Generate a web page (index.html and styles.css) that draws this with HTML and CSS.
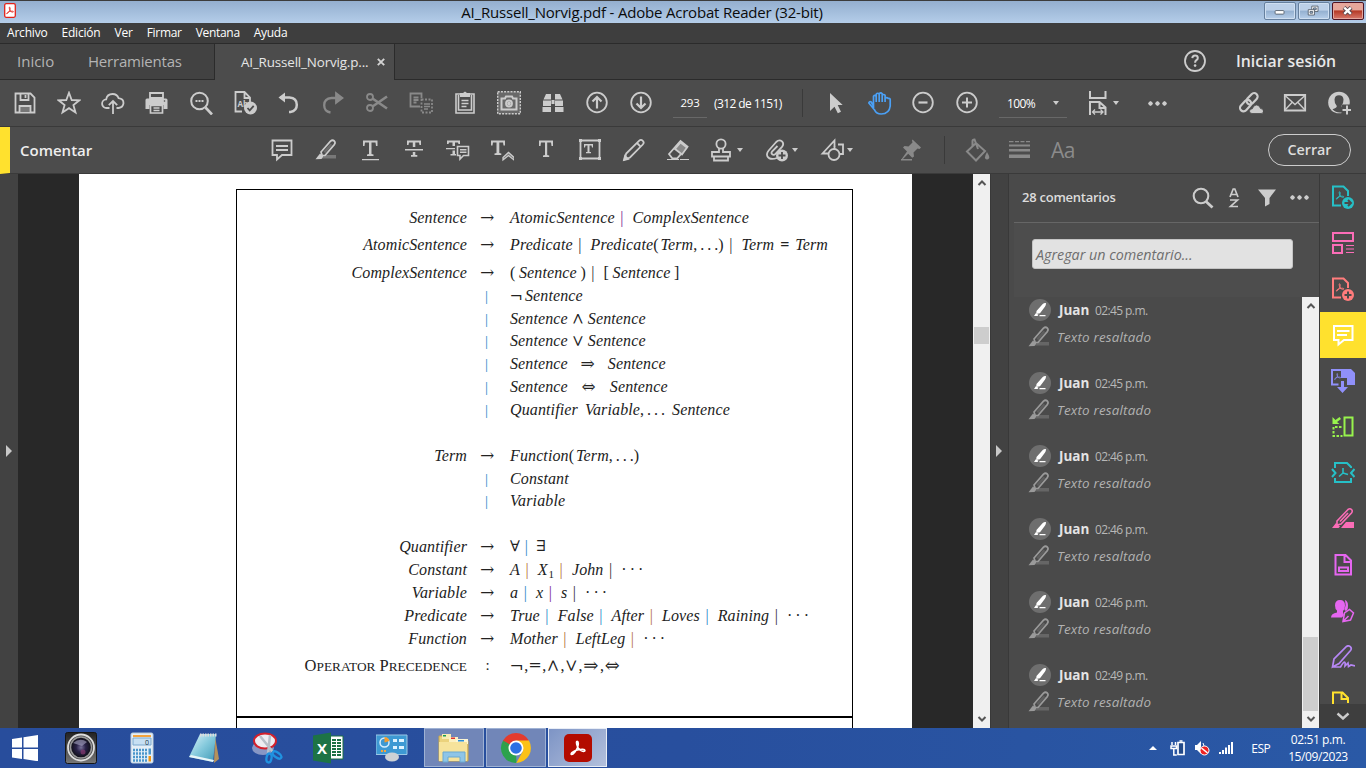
FILE: index.html
```html
<!DOCTYPE html>
<html lang="es">
<head>
<meta charset="utf-8">
<title>AI_Russell_Norvig.pdf - Adobe Acrobat Reader (32-bit)</title>
<link rel="stylesheet" href="styles.css">
</head>
<body>
<svg class="defs" width="0" height="0">
  <symbol id="marker" viewBox="0 0 24 24">
    <path d="M8 20.500h14v-3.500h-11z" fill="currentColor" opacity=".35"/>
    <path d="M7 14 16.500 3.200q2-1.800 3.800-.2 1.500 1.600 0 3.600L11 17.500H8.200z" fill="none" stroke="currentColor" stroke-width="1.700"/>
    <path d="M9.500 13.500 16.500 5.500l1.800 1.500-7 8.200z" fill="currentColor" opacity=".25"/>
    <path d="M6 15.500 9.500 18.500 7.500 21 1.500 21.200z" fill="currentColor"/>
  </symbol>
  <symbol id="avatar" viewBox="0 0 24 24">
    <circle cx="12" cy="12" r="11" fill="#6e6e6e"/>
    <path d="M8.500 13 14.500 6.200q2-1.600 3.600-1-.2 2.200-1.200 3.600L12 15.300l-3.800.7zM6 18l1.800-2.800 2.700 1.600-1 1.200zM11.500 17h6v1.200h-6z" fill="#fff"/>
  </symbol>
  <symbol id="acro" viewBox="0 0 12 12">
    <path d="M5.400 1.500c1 0 1 2.200.3 4.200S2.700 10.500 1.700 10.300 2.700 8 5.600 7.300s5-.6 5 .4-2.700.6-4-1S4.500 1.500 5.400 1.500z" fill="none" stroke="currentColor" stroke-width="1.100"/>
  </symbol>
  <symbol id="up" viewBox="0 0 10 8"><path d="M1.500 6 5 2.500 8.500 6" fill="none" stroke="#555" stroke-width="2"/></symbol>
  <symbol id="down" viewBox="0 0 10 8"><path d="M1.500 2 5 5.500 8.500 2" fill="none" stroke="#555" stroke-width="2"/></symbol>
</svg>

<header class="titlebar">
  <svg class="app-icon" viewBox="0 0 12 15"><rect x=".7" y=".7" width="10.600" height="13.600" rx="1.500" fill="#fff" stroke="#e2231a" stroke-width="1.300"/><use href="#acro" x="1.500" y="3" width="9" height="9" color="#e2231a"/></svg>
  <h1 class="window-title">AI_Russell_Norvig.pdf - Adobe Acrobat Reader (32-bit)</h1>
  <div class="window-buttons">
    <span class="wbtn"><svg viewBox="0 0 32 18"><rect x="10.500" y="8.500" width="10" height="4" rx="1" fill="#fff" stroke="#56606c"/></svg></span>
    <span class="wbtn"><svg viewBox="0 0 32 18"><path d="M13.500 3.500h7v6h-7z" fill="#fff" stroke="#56606c"/><path d="M15.500 5.500h3v2h-3z" fill="#9db9d8" stroke="#56606c"/><path d="M9.500 7.500h7v6h-7z" fill="#fff" stroke="#56606c"/><path d="M11.500 9.500h3v2h-3z" fill="#9db9d8" stroke="#56606c"/></svg></span>
    <span class="wbtn close"><svg viewBox="0 0 32 18"><path d="M11.500 5 19.500 12.500M19.500 5 11.500 12.500" stroke="#51424a" stroke-width="4.600"/><path d="M11.800 5.300 19.200 12.200M19.200 5.300 11.800 12.200" stroke="#fff" stroke-width="2.600"/></svg></span>
  </div>
</header>

<nav class="menubar"><span>Archivo</span><span>Edición</span><span>Ver</span><span>Firmar</span><span>Ventana</span><span>Ayuda</span></nav>

<div class="tabs">
  <span class="tab home">Inicio</span><span class="tab tools">Herramientas</span>
  <span class="tab active"><span class="doc-name">AI_Russell_Norvig.p...</span><svg viewBox="0 0 10 10"><path d="M1.800 1.800 8.200 8.200M8.200 1.800 1.800 8.200" stroke="#d2d2d2" stroke-width="1.900"/></svg></span>
  <svg class="help" viewBox="0 0 24 24"><circle cx="12" cy="12" r="10" fill="none" stroke="#ccc" stroke-width="1.800"/><path d="M9.300 9.200q.2-2.600 2.800-2.600t2.700 2.300q0 1.300-1.400 2.200T12.100 13.800" fill="none" stroke="#ccc" stroke-width="2"/><circle cx="12.100" cy="16.600" r="1.300" fill="#ccc"/></svg>
  <span class="signin">Iniciar sesión</span>
</div>

<div class="toolbar">
  <div class="icons">
    <svg viewBox="0 0 24 24" class="line"><path d="M2.500 2.500h15l4 4v15h-19z"/><path d="M7.500 3v6h8V3"/><path d="M6.500 21v-6h11v6" fill="#777"/><path d="M12.500 4v3"/></svg>
    <svg viewBox="0 0 24 24" class="line"><path d="m12 1.800 2.700 7.200 7.700.3-6 4.800 2.100 7.400L12 17.200l-6.500 4.300 2.100-7.400-6-4.800 7.700-.3z"/></svg>
    <svg viewBox="0 0 24 24" class="line"><path d="M8.500 17H5.600a4.300 4.300 0 0 1-.4-8.600Q6 3 11.600 3q4.600 0 6 4.200 5 .6 4.900 5-.4 4.300-4.800 4.800h-2.200M12 23V10.500M7.800 14.200 12 10l4.200 4.200"/></svg>
    <svg viewBox="0 0 24 24"><path d="M5 2h13v5H5z" fill="none" stroke="#ccc" stroke-width="1.800"/><path d="M.5 9q0-1.500 1.500-1.500h19q1.500 0 1.500 1.500v9h-4v-4h-14v4h-4z"/><path d="M5.500 14.500h12v7.500h-12zM8.500 17h6M8.500 19.500h6" fill="none" stroke="#ccc" stroke-width="1.700"/><circle cx="19.500" cy="10" r=".8" fill="#4c4c4c"/></svg>
    <svg viewBox="0 0 24 24" class="line"><circle cx="10.500" cy="10" r="8.300" stroke-width="2"/><path d="m16.500 16.500 6.500 7" stroke-width="2.600"/><path d="M6.500 10h8" stroke-width="2" stroke-dasharray="2 1"/></svg>
    <svg viewBox="0 0 24 24" class="line"><path d="M9 20.500H2.500V1h9L17 6.500V11M11.500 1v6H17"/><text x="4.500" y="16" class="ab">Ab</text><circle cx="17.500" cy="17" r="6.500" fill="#ccc" stroke="none"/><path d="m14.500 17 2.200 2.400 4-4.500" stroke="#4c4c4c"/></svg>
    <svg viewBox="0 0 24 24" class="line"><path d="M3 6.500h9.500q7.300.5 7.300 7.300 0 6.200-6.300 7.200H12" stroke-width="2.500"/><path d="M8 1.500v10L1.500 6.500z" fill="#ccc" stroke="none"/></svg>
    <svg viewBox="0 0 24 24" class="line dim"><path d="M20 7h-9.500q-7.300.5-7.300 7.300 0 6.200 6.300 7.200" stroke-width="2.300"/><path d="M15 2v10l6.500-5z" fill="#ccc"/></svg>
    <svg viewBox="0 0 24 24" class="line dim"><circle cx="5" cy="6" r="3"/><circle cx="5" cy="17" r="3"/><path d="M7.500 7.500 22 17.500M7.500 15.500 22 5.500" stroke-width="2.600"/></svg>
    <svg viewBox="0 0 24 24" class="line dim"><path d="M11 15.500H1.500v-13h11V7M4.500 6.500h5M4.500 9h5M4.500 11.500h3"/><path d="M12.500 8.500h10.500v13H12.500z" stroke-dasharray="2 1.500"/><path d="M15 13h6M15 15.500h6M15 18h4" stroke-width="1.300"/></svg>
    <svg viewBox="0 0 24 24" class="line"><path d="M3 3h18v19H3zM5.500 4v15h13V4" stroke-width="1.600"/><path d="M8.500 9.500h7M8.500 12.500h7M8.500 15.500h5" stroke-width="1.400"/><path d="M7 2h3l2-1.500L14 2h3v4H7z" fill="#ccc" stroke="none"/></svg>
    <svg viewBox="0 0 24 24" class="line"><path d="M.7.700h22.600v22H.7z" fill="#696969" stroke-width="1.400" stroke-dasharray="2 1.200"/><path d="M4.500 7.500H8l1-2h6l1 2h3.500v11h-15z" stroke-width="2"/><circle cx="12" cy="12.500" r="3"/><circle cx="12" cy="12.500" r="1" fill="#ccc"/></svg>
    <svg viewBox="0 0 24 24"><path d="M5 3h5v5.500H2.500zM14 3h5l2.500 5.500H14zM2 9.500h8V15H2zM14 9.500h8V15h-8zM1.500 16H10v5H1.500zM14 16h8.500v5H14zM10.500 9h3v4h-3z"/></svg>
    <svg viewBox="0 0 24 24" class="line"><circle cx="12" cy="11.500" r="9.800"/><path d="M12 17.500V7M7.500 10.500 12 6l4.500 4.500" stroke-width="2.200"/></svg>
    <svg viewBox="0 0 24 24" class="line"><circle cx="12" cy="11.500" r="9.800"/><path d="M12 5.500v11M7.500 12.500l4.500 4.500 4.500-4.500" stroke-width="2.200"/></svg>
  </div>
  <span class="page-field">293</span><span class="page-count">(312 de 1151)</span>
  <span class="divider d1"></span>
  <div class="icons nav">
    <svg viewBox="0 0 24 24"><path d="M6 2v18l4.500-4.200 3.300 6.500 3.200-1.500L13.700 14h5z"/></svg>
    <svg viewBox="0 0 24 24" class="hand"><path d="M5.500 15V5.300q1.300-1.800 2.700 0V11 3.200q1.500-1.900 3 0V11 2.800q1.500-1.800 3 0V11 4.300q1.500-1.600 2.900 0V11 7.500q1.600-1.600 3.100 0 1.700-.5 2 1V15q-.8 7.800-9 8-5 0-6.600-4L.8 12q.5-2 2.400-1z"/></svg>
    <svg viewBox="0 0 24 24" class="line"><circle cx="11" cy="11.500" r="9.800"/><path d="M6.500 11.500h9" stroke-width="2.200"/></svg>
    <svg viewBox="0 0 24 24" class="line"><circle cx="11" cy="11.500" r="9.800"/><path d="M6 11.500h10M11 6.500v10" stroke-width="2"/></svg>
  </div>
  <span class="zoom-field">100%<i class="caret"></i></span>
  <svg class="fit" viewBox="0 0 24 26"><g fill="none" stroke="#ccc" stroke-width="2"><path d="M4 1v7h15.500V1M4 25V12h9.500l6 5.500V25M13.500 12v6h6"/><path d="M6.500 22h10M9 19.500 6.500 22 9 24.500M14.500 19.500 17 22l-2.500 2.500" stroke-width="1.300"/></g></svg><i class="caret fit-caret"></i>
  <span class="dots more"></span>
  <div class="icons share">
    <svg viewBox="0 0 24 24" class="line"><g transform="rotate(-47 10 11)"><rect x="-1.500" y="7.500" width="13" height="7" rx="3.500" stroke-width="2.200"/><rect x="8" y="7.500" width="13" height="7" rx="3.500" stroke-width="2.200"/></g><path d="M13 22.500q-2.500 0-2.500-2.300t2.800-2.400Q14.500 14 17.500 14t4 3.500q3 .2 3 2.700t-2.500 2.300z" fill="#ccc" stroke="#4c4c4c" stroke-width=".8"/></svg>
    <svg viewBox="0 0 24 24" class="line"><path d="M1.800 4h20.400v15.500H1.800z"/><path d="m2 4.500 10 9 10-9M2 19l7-7.500M22 19l-7-7.500" stroke-width="1.400"/></svg>
    <svg viewBox="0 0 24 24"><circle cx="12" cy="11.500" r="10.800"/><path d="M5.500 18.300q4.500-1.300 4.300-3.300Q7.300 12.500 7.500 8.500q.3-4.300 4.500-4.300t4.500 4.300q.2 4-2.300 6.500.2 1.500 2.300 2.200V21q-6.500 2-11-2.700z" fill="#4c4c4c"/><path d="M14.500 13.500h10v10h-10z" fill="#4c4c4c"/><path d="M20 14.500v9M15.500 19h8.500" stroke="#ccc" stroke-width="2"/></svg>
  </div>
</div>

<div class="commentbar">
  <h2>Comentar</h2>
  <div class="icons">
    <svg viewBox="0 0 24 24" class="line"><path d="M2.500 2.500h19V17H12l-5 4.500V17H2.500zM6 8h12M6 12h12"/></svg>
    <svg viewBox="0 0 24 24"><use href="#marker"/></svg>
    <svg viewBox="0 0 24 24"><path d="M5 2.500h14.500V8H18l-.5-3.500H13.500V16l2 .5V18H9v-1.500l2-.5V4.500H7L6.500 8H5zM4 21h17v1.300H4z"/></svg>
    <svg viewBox="0 0 24 24"><path d="M5 2.500h14V7h-1.500L17 4.500h-3.700V9h-2.500V4.500H7L6.500 7H5zM3 11h18v1.400H3zM10.800 14h2.500v3h2v1.800H9V17h1.800z"/></svg>
    <svg viewBox="0 0 24 24"><path d="M1 2.500h13V6h-1.500L12 4.500H9V8H6.500V4.500H3L2.500 6H1zM0 10h9v1.300H0zM6.500 12.500H9V16h1v1.500H4.500V16h2z"/><path d="M11.500 8.500h11v9h-5l-3.500 3.500v-3.500h-2.500zM14 11.700h6.500M14 14.300h6.500" fill="none" stroke="#ccc" stroke-width="1.600"/></svg>
    <svg viewBox="0 0 24 24"><path d="M1 2.500h14V7.500h-1.500L13 4.500H9.300V15l2 .5V17H4.500v-1.500l2-.5V4.500H3l-.5 3H1z"/><path d="m13 19.500 5.500-5 5.500 5V22l-5.500-4.500L13 22z" fill="#777" stroke="#ccc" stroke-width="1.300"/></svg>
    <svg viewBox="0 0 24 24"><path d="M5 2.500h14V8h-1.500L17 4.500h-3.800V17l2 .5V19H9v-1.500l2-.5V4.500H7L6.500 8H5z"/></svg>
    <svg viewBox="0 0 24 24" class="line"><path d="M2.500 2.500h19v18h-19z"/><path d="M1 1h3v3H1zM20 1h3v3h-3zM1 19h3v3H1zM20 19h3v3h-3z" fill="#ccc" stroke="none"/><path d="M6 6h9v3.500h-1l-.5-2h-2V14H13v1.300H8V14h1.500V7.500h-2l-.5 2H6z" fill="#ccc" stroke="none"/></svg>
    <svg viewBox="0 0 24 24" class="line"><path d="m2.500 21.500 1.700-6L17 2.800q2-1.800 3.800 0t0 3.700L8 19.500zM15 5l3.800 3.800"/><path d="m2 22 1-4 3 3z" fill="#ccc"/></svg>
    <svg viewBox="0 0 24 24" class="line"><path d="m3 16 11.500-13 7 5.500L11 20.500H6.500z"/><path d="m9 11 7 5.500 5-7-6.500-5z" fill="#888"/><path d="M1 21.500h12M14 21.500h9" stroke-width="1.200"/></svg>
  </div>
  <div class="icons wide">
    <span><svg viewBox="0 0 24 24" class="line"><circle cx="11" cy="6" r="4.600"/><path d="M9 10v4H2v4.500h18V14h-7v-4M4 18.500v4h14v-4"/></svg><i class="caret"></i></span>
    <span><svg viewBox="0 0 24 24" class="line"><path d="M12 20q-7 2.500-9.500-1.500-1.500-3 1.200-6l7.500-8.500q3-3 5.800-.6 2.400 2.600 0 5.500l-6.500 7q-1.800 1.600-3.300.4t0-3L12.500 8"/><circle cx="17" cy="17.500" r="6" fill="#ccc" stroke="none"/><path d="M17 14v7M13.500 17.500h7" stroke="#4c4c4c"/></svg><i class="caret"></i></span>
    <span><svg viewBox="0 0 24 24" class="line"><path d="M9 15.500H2.500L14.500 2.500v6M18 6.500h5V16h-3"/><path d="M14.500 8v3"/><circle cx="14" cy="16.500" r="5.500"/></svg><i class="caret"></i></span>
  </div>
  <svg class="ic pin dim" viewBox="0 0 24 24"><path d="m13.500 1.500 8.500 8-1.500 1.500-2-.5-4 4 .5 4-1.800 1.200-4-4L3 22H2l6-8.500-4-4L5.500 8l4 .5 4-4-.5-2zM2 21h11v1.500H2z"/></svg>
  <span class="divider d3"></span>
  <svg class="ic bucket dim line" viewBox="0 0 24 24"><path d="m2 13.500 9-8.500 9 8-9 9.500zM7.500 9V3q0-1.500 2-1.500L13 11" stroke-width="2"/><path d="M22 14q2.500 4 2.300 6-2.300 3-4.500 0 .2-2.500 2.200-6z" fill="#ccc" stroke="none"/></svg>
  <svg class="ic lines dim" viewBox="0 0 24 24"><path d="M2 3h4.500v1.200H2zM8 3h4v1.200H8zM13.500 3h4v1.200h-4zM19 3h4v1.200h-4zM2 6.500h21v2H2zM2 11h21v2.500H2zM2 16.500h21V20H2z"/></svg>
  <span class="aa">Aa</span>
  <span class="close-btn">Cerrar</span>
</div>

<main class="workspace">
  <div class="strip left"><i class="tri"></i></div>
  <section class="canvas">
    <div class="page">
      <div class="figure">
        <div class="grammar">
          <div class="rule r1"><em>Sentence</em><u>→</u><p><em>AtomicSentence</em><b class="pu">|</b><em>ComplexSentence</em></p></div>
          <div class="rule r2"><em>AtomicSentence</em><u>→</u><p><em>Predicate</em><b>|</b><em>Predicate</em><s>(</s><em class="tl">Term</em><s>, . . .)</s><b>|</b><em>Term</em><span class="eq">=</span><em>Term</em></p></div>
          <div class="rule r3"><em>ComplexSentence</em><u>→</u><p><span class="br">(</span><em>Sentence</em><span class="br cl">)</span><b>|</b><span class="br">[</span><em>Sentence</em><span class="br cl">]</span></p></div>
          <div class="rule"><em></em><u class="alt">|</u><p><span class="m neg">¬</span><em>Sentence</em></p></div>
          <div class="rule"><em></em><u class="alt">|</u><p><em>Sentence</em><span class="m op">∧</span><em>Sentence</em></p></div>
          <div class="rule"><em></em><u class="alt">|</u><p><em>Sentence</em><span class="m op">∨</span><em>Sentence</em></p></div>
          <div class="rule"><em></em><u class="alt">|</u><p><em>Sentence</em><span class="m imp">⇒</span><em>Sentence</em></p></div>
          <div class="rule"><em></em><u class="alt">|</u><p><em>Sentence</em><span class="m iff">⇔</span><em>Sentence</em></p></div>
          <div class="rule gap"><em></em><u class="alt">|</u><p><em>Quantifier</em><em class="w8">Variable</em><s>, . . .</s><em class="w8">Sentence</em></p></div>
          <div class="rule"><em>Term</em><u>→</u><p><em>Function</em><s>(</s><em class="tl">Term</em><s>, . . .)</s></p></div>
          <div class="rule"><em></em><u class="alt">|</u><p><em>Constant</em></p></div>
          <div class="rule gap"><em></em><u class="alt">|</u><p><em>Variable</em></p></div>
          <div class="rule"><em>Quantifier</em><u>→</u><p class="quant"><span class="m">∀</span><b class="bl">|</b><span class="m">∃</span></p></div>
          <div class="rule"><em>Constant</em><u>→</u><p><em>A</em><b class="or">|</b><em>X</em><sub>1</sub><b class="or">|</b><em>John</em><b>|</b><s>· · ·</s></p></div>
          <div class="rule"><em>Variable</em><u>→</u><p><em>a</em><b class="bl">|</b><em>x</em><b class="pu">|</b><em>s</em><b>|</b><s>· · ·</s></p></div>
          <div class="rule"><em>Predicate</em><u>→</u><p><em>True</em><b class="bl">|</b><em>False</em><b class="bl">|</b><em>After</em><b class="or">|</b><em>Loves</em><b class="bl">|</b><em>Raining</em><b>|</b><s>· · ·</s></p></div>
          <div class="rule"><em>Function</em><u>→</u><p><em>Mother</em><b class="or">|</b><em>LeftLeg</em><b class="or">|</b><s>· · ·</s></p></div>
          <div class="rule last"><span class="sc">O<small>PERATOR</small> P<small>RECEDENCE</small></span><u class="colon">:</u><p class="ops"><span class="m">¬</span>,<span class="m">=</span>,<span class="m">∧</span>,<span class="m">∨</span>,<span class="m">⇒</span>,<span class="m">⇔</span></p></div>
        </div>
      </div>
      <div class="figure-foot"></div>
    </div>
  </section>
  <div class="scroll main-scroll"><svg viewBox="0 0 10 8"><use href="#up"/></svg><i></i><svg viewBox="0 0 10 8"><use href="#down"/></svg></div>
  <div class="strip right"><i class="tri"></i></div>
  <aside class="panel">
    <div class="panel-head">
      <h3>28 comentarios</h3>
      <svg class="p-search" viewBox="0 0 24 24"><circle cx="10" cy="10" r="7.300" fill="none" stroke="#ccc" stroke-width="2.100"/><path d="m15 15.500 6.500 6" stroke="#ccc" stroke-width="2.800"/></svg>
      <svg class="p-sort" viewBox="0 0 12 20"><path d="M2 9 5.200 1h1.600L10 9M3.500 6.500h5M2 12h7.500L2.500 18.500H10" fill="none" stroke="#ccc" stroke-width="1.700"/></svg>
      <svg class="p-filter" viewBox="0 0 18 18"><path d="M0 .5h18L11.500 9v6L7 17.500V9z" fill="#ccc"/></svg>
      <span class="dots"></span>
    </div>
    <div class="panel-add"><div class="input">Agregar un comentario...</div></div>
    <div class="panel-body">
      <div class="list">
        <article><svg><use href="#avatar"/></svg><strong>Juan</strong><time>02:45 p.m.</time><svg class="mk"><use href="#marker"/></svg><q>Texto resaltado</q></article>
        <article><svg><use href="#avatar"/></svg><strong>Juan</strong><time>02:45 p.m.</time><svg class="mk"><use href="#marker"/></svg><q>Texto resaltado</q></article>
        <article><svg><use href="#avatar"/></svg><strong>Juan</strong><time>02:46 p.m.</time><svg class="mk"><use href="#marker"/></svg><q>Texto resaltado</q></article>
        <article><svg><use href="#avatar"/></svg><strong>Juan</strong><time>02:46 p.m.</time><svg class="mk"><use href="#marker"/></svg><q>Texto resaltado</q></article>
        <article><svg><use href="#avatar"/></svg><strong>Juan</strong><time>02:46 p.m.</time><svg class="mk"><use href="#marker"/></svg><q>Texto resaltado</q></article>
        <article><svg><use href="#avatar"/></svg><strong>Juan</strong><time>02:49 p.m.</time><svg class="mk"><use href="#marker"/></svg><q>Texto resaltado</q></article>
      </div>
      <div class="scroll list-scroll"><svg viewBox="0 0 10 8"><use href="#up"/></svg><i></i><svg viewBox="0 0 10 8"><use href="#down"/></svg></div>
    </div>
  </aside>
  <nav class="rail">
    <div class="rail-items">
      <span class="teal"><svg viewBox="0 0 24 24"><path d="M10 20.500H2V1.500h10.500L17 6v5"/><use href="#acro" x="4" y="5" width="10" height="11"/><circle cx="17" cy="18" r="6" class="fill"/><path d="M13.500 18h6M17 15l3 3-3 3" class="cut"/></svg></span>
      <span class="pink"><svg viewBox="0 0 24 24"><path d="M2 2h20v8H2zM2 14h9v8H2z"/><path d="M15 14.500h8M15 18h8M15 21.500h8" stroke-width="1.200"/></svg></span>
      <span class="red"><svg viewBox="0 0 24 24"><path d="M10 20.500H2V1.500h10.500L17 6v5"/><use href="#acro" x="4" y="5" width="10" height="11"/><circle cx="17" cy="18" r="6" class="fill"/><path d="M13.500 18h7M17 14.500v7" class="cut"/></svg></span>
      <span class="selected"><svg viewBox="0 0 24 24"><path d="M3 3h18.500v14H13l-5.500 4.500V17H3zM6 8h12.500M6 12h10"/></svg></span>
      <span class="violet"><svg viewBox="0 0 24 24"><path d="M7.500 15.500H1V1h10v8"/><path d="M12 0h8l4 4v12h-8V9h-4zM10 12h3v6h4l-5.500 6L6 18h4z" class="fill"/><use href="#acro" x="2.500" y="3" width="8" height="9"/></svg></span>
      <span class="green"><svg viewBox="0 0 24 24"><path d="M13.500 2.500h8v18h-8z"/><path d="M10.500 12H2.500v9h9" stroke-dasharray="2.500 1.500"/><path d="M1.500 2v7h7L6 7l4-3-1.500-2-4 3z" class="fill"/></svg></span>
      <span class="teal"><svg viewBox="0 0 24 24"><path d="M4 7V2h12l4 4v1M4 17v4h16v-4M1 8l3.500 4L1 16M23.500 8 20 12l3.500 4"/><path d="M12 7v5l-4 3.500M12 12l5 1.500" stroke-width="1.600"/></svg></span>
      <span class="pink"><svg viewBox="0 0 24 24"><path d="M6 14 17 2.500q2-1.500 3.500 0t0 3.500L10 17l-4 1zM9 14.500l8-8.500" stroke-width="1.600"/><path d="m1 21 4-5 4 3.500-1.500 1.500zM10 21l5-6h8v6z" class="fill"/></svg></span>
      <span class="magenta"><svg viewBox="0 0 24 24"><path d="M4.500 2h10l5.500 5.500V21.500H4.500zM13.500 2v7H20M8 14.500h9v3.500H8z"/></svg></span>
      <span class="magenta"><svg viewBox="0 0 24 24"><path d="M9 1q5 0 5 5.500 0 4-2 5.500v2l1 2-2 2.500H0q0-4 6-5v-2Q4 10 4 6.500 4 1 9 1zM14 1q3 1 3 5.500T15 12l-1.500-1q2-5 .5-10z" class="fill"/><path d="m12 22.500 1.500-8.500 5-3.500 4 3.500-3 7zM12 22.500l5.500-5.500" stroke-width="1.500"/></svg></span>
      <span class="purple"><svg viewBox="0 0 24 24"><path d="m1.500 22 1.500-8L15.500 1.500q2-1.500 3.800.2t.2 3.800L8 18.500zM1.500 22h8q3-5 4-5t.5 4l3-3 .5 3.500 2.500-1.500 4 1" stroke-width="1.700"/></svg></span>
      <span class="yellow"><svg viewBox="0 0 24 24"><path d="M9 21H2V1.500h9.500L17 7v5M10.500 2v6H17M13 14h10"/></svg></span>
    </div>
    <div class="rail-more"><svg viewBox="0 0 14 8"><path d="m1.500 1.500 5.500 5 5.500-5" fill="none" stroke="#ccc" stroke-width="2.400"/></svg></div>
  </nav>
</main>

<footer class="taskbar">
  <span class="app start"><svg viewBox="0 0 28 26"><path d="m1 4 10-1.500v10H1zM12.500 2.300 27 0v12.500H12.500zM1 14h10v10L1 22.500zM12.500 14H27v12.300L12.500 24z" fill="#fff"/></svg></span>
  <span class="app cam"><svg viewBox="0 0 32 32"><defs><radialGradient id="lens"><stop offset="0" stop-color="#78719a"/><stop offset=".45" stop-color="#292248"/><stop offset="1" stop-color="#0e0e14"/></radialGradient><linearGradient id="body" x2="0" y2="1"><stop stop-color="#222"/><stop offset="1" stop-color="#777"/></linearGradient></defs><rect x=".5" y=".5" width="31" height="31" rx="2" fill="url(#body)" stroke="#161616"/><circle cx="16" cy="15.500" r="13" fill="#4a4a4c" stroke="#ddd" stroke-width="1.800"/><circle cx="16" cy="15.500" r="10.500" fill="url(#lens)" stroke="#999" stroke-width="1.500"/><path d="M8 11q7-6 14-1l-5 4z" fill="#aaa8c6" opacity=".6"/><circle cx="18" cy="20" r="2.500" fill="#87396f" opacity=".7"/></svg></span>
  <span class="app calc"><svg viewBox="0 0 24 32"><rect x="1" y="1" width="22" height="30" rx="1.500" fill="#e5eff7" stroke="#b9cddd"/><path d="M3 3h18v2H3z" fill="#f2a33e"/><path d="M3 6h18v7H3z" fill="#c7e0f3" stroke="#7ba9cf"/><text x="15" y="12.500" font-size="7" fill="#234">0</text><path d="M3 18h14M3 21.500h14M3 25h14M3 28.500h14" stroke="#4b96cb" stroke-width="2.300" stroke-dasharray="2 1"/><path d="M18.500 16.500h2.500v6h-2.500z" fill="#4b96cb"/><path d="M18.500 24h2.500v5.500h-2.500z" fill="#f2930e"/></svg></span>
  <span class="app note"><svg viewBox="0 0 32 32"><defs><linearGradient id="nt" x2="1" y2="1"><stop stop-color="#dff4fa"/><stop offset=".5" stop-color="#84c9dc"/><stop offset="1" stop-color="#3f99b6"/></linearGradient></defs><path d="m27 4 4 23-5 4z" fill="#b4915c"/><path d="M12 2h16l-3 28L1 25z" fill="url(#nt)"/><path d="m1 25 24 5 1-2L3 23z" fill="#e8f5f8"/><path d="M12 3h17" stroke="#ddd" stroke-width="3" stroke-dasharray="1.500 1"/></svg></span>
  <span class="app snip"><svg viewBox="0 0 32 32"><ellipse cx="12" cy="16" rx="11" ry="7" fill="#8797c5"/><ellipse cx="14" cy="9" rx="11" ry="7.500" fill="#eeedf2" stroke="#d3202c" stroke-width="2"/><path d="m9 4 13 16M19 3 17 22" stroke="#b9c0c9" stroke-width="2.500"/><g fill="none" stroke="#2093e1" stroke-width="2.300"><ellipse cx="18" cy="26" rx="2.500" ry="4.500" transform="rotate(10 18 26)"/><ellipse cx="26" cy="23" rx="2.500" ry="5" transform="rotate(-55 26 23)"/></g></svg></span>
  <span class="app excel"><svg viewBox="0 0 32 32"><path d="M16 4h14v23H16z" fill="#fff" stroke="#1c7144"/><path d="M19 8h9M19 11h9M19 14h9M19 17h9M19 20h9M19 23h9" stroke="#1c7144" stroke-width="2" stroke-dasharray="4 1"/><path d="M0 3.500 18 .5v31L0 28.500z" fill="#1d7345"/><text x="4" y="21.500" class="xl">X</text></svg></span>
  <span class="app ctl"><svg viewBox="0 0 32 28"><path d="M0 1h31v19.500H0z" fill="#3d99d3" stroke="#9bc8e6"/><circle cx="8.500" cy="8.500" r="4.500" fill="none" stroke="#d6efff" stroke-width="1.500"/><path d="M8.500 8.500V3a5.500 5.500 0 0 1 5 4z" fill="#f19b2f"/><path d="M17 5h4v3h-4zM23 5h5v3h-5zM17 12h4v3h-4zM23 12h5v3h-5z" fill="#dff3ff"/><path d="M5 17h5" stroke="#f3a63e" stroke-width="2" stroke-dasharray="2 1"/><ellipse cx="16" cy="23" rx="7" ry="4.500" fill="#ccd1d5"/></svg></span>
  <span class="app open"><svg viewBox="0 0 32 30"><path d="M1 3h10v3h8v2h11v20H1z" fill="#ebd27c" stroke="#c7a64d"/><path d="M4 1h9v5H4z" fill="#f8ecb3"/><path d="M5 2h3v1.500H5z" fill="#1a9d4f"/><path d="M11 4h9v5h-9z" fill="#fcf1c2"/><path d="M13 4.500h4V6h-4z" fill="#d33"/><path d="M18 6h12v5H18z" fill="#fbf6d5"/><path d="M20 7h6v1.500h-6z" fill="#2a8fd6"/><path d="M1 9h28v19H1z" fill="#f6e39b"/><path d="M5 29V19h22v10h-5v-5H10v5z" fill="#8ec5e7" stroke="#6ba9d1"/></svg></span>
  <span class="app open"><svg viewBox="0 0 32 32"><path d="M16 16 2.200 8A16 16 0 0 1 29.800 8z" fill="#e33b2e"/><path d="M16 16 16.500 32A16 16 0 0 1 2.200 8z" fill="#2ca24c"/><path d="M16 8h13.800A16 16 0 0 1 16.300 32L23 20z" fill="#fbc116"/><path d="M2.200 8h13.800v8H7z" fill="#e33b2e"/><path d="m2.200 8 7 12 6.800-4z" fill="#2ca24c"/><circle cx="16" cy="16" r="8" fill="#fff"/><circle cx="16" cy="16" r="6.200" fill="#2d70e3"/></svg></span>
  <span class="app open current"><svg viewBox="0 0 28 28"><rect width="28" height="28" rx="5" fill="#b30b00"/><use href="#acro" x="5" y="4.500" width="18" height="19" color="#fff"/></svg></span>
  <div class="tray">
    <i class="tray-up"></i>
    <svg class="bat" viewBox="0 0 16 16"><path d="M8 2.500h6v12H8z" fill="#244a88" stroke="#fff" stroke-width="1.700"/><path d="M9.500 1h3M2 2v3M5.500 2v3M1 6h5.500v2.500H1zM3.800 8v7h3" stroke="#fff" stroke-width="1.500" fill="none"/></svg>
    <svg class="vol" viewBox="0 0 16 16"><path d="M1 5h2l4-4v13l-4-4H1z" fill="#fff"/><path d="M9 3q3 4 0 9" stroke="#fff" fill="none"/><circle cx="10.500" cy="10.500" r="4.500" fill="#e22" stroke="#fff"/><path d="m7.500 8 6 5" stroke="#fff" stroke-width="1.500"/></svg>
    <svg class="net" viewBox="0 0 16 14"><path d="M1 11h2v2H1zM4 9h2v4H4zM7 6.500h2V13H7zM10 4h2v9h-2zM13 1h2v12h-2z" fill="#fff"/></svg>
    <span class="lang">ESP</span>
    <span class="clock"><span>02:51 p.m.</span><span>15/09/2023</span></span>
  </div>
</footer>
</body>
</html>
```
FILE: styles.css
```css
* { box-sizing: border-box; }
body { margin: 0; width: 1366px; height: 768px; overflow: hidden; display: flex; flex-direction: column; background: #4b4b4b; font-family: "Open Sans", "Noto Sans", sans-serif; color: #fff; }
svg { display: block; flex: none; }
.defs { position: absolute; }
h1, h2, h3, p { margin: 0; font-weight: normal; }

.titlebar { height: 23px; flex: none; border-top: 1px solid #3c3c3c; background: linear-gradient(#94afcf, #b4cde9); display: grid; grid-template-columns: 100px 1fr 100px; padding: 0 2px 0 4px; }
.app-icon { width: 12px; height: 15px; margin-top: 2px; }
.window-title { font-size: 15px; line-height: 22px; color: #0b0b0b; white-space: nowrap; letter-spacing: -.2px; padding-right: 84px; justify-self: center; }
.window-buttons { display: flex; gap: 2px; justify-content: flex-end; }
.wbtn { width: 32px; height: 18px; margin-top: 1px; border: 1px solid #66809e; border-radius: 2px; background: linear-gradient(#bcd0e8 45%, #94b0d0 50%, #b8cfea); box-shadow: inset 0 0 0 1px #cfdff1; }
.wbtn svg { width: 30px; height: 16px; }
.close { border-color: #4e1322; background: linear-gradient(#e6a79b 42%, #b53a27 50%, #d8796c); box-shadow: inset 0 0 0 1px #e3a69d; }

.menubar { height: 21px; flex: none; background: #3e3e3e; border-bottom: 1px solid #2b2b2b; display: flex; gap: 14px; padding-left: 7px; font-size: 12px; line-height: 20px; letter-spacing: -.2px; }
.menubar span:nth-child(n+4) { letter-spacing: -.3px; }

.tabs { height: 36px; flex: none; display: flex; background: #424242; border-bottom: 1px solid #2b2b2b; line-height: 35px; color: #b4b4b4; }
.tab { font-size: 15px; white-space: nowrap; }
.home { padding-left: 17px; width: 88px; }
.tools { width: 126px; letter-spacing: -.2px; }
.tab.active { width: 181px; height: 36px; background: #4c4c4c; border: solid #2b2b2b; border-width: 0 1px; padding-left: 26px; display: flex; align-items: center; font-size: 13.400px; color: #e6e6e6; letter-spacing: -.15px; }
.doc-name { width: 135px; }
.tab.active svg { width: 10px; height: 10px; }
.help { width: 24px; height: 24px; margin: 5px 29px 0 788px; }
.signin { font-weight: 600; font-size: 15.800px; color: #e8e8e8; white-space: nowrap; }

.toolbar, .commentbar { height: 47px; flex: none; display: flex; align-items: center; background: #4c4c4c; border-bottom: 1px solid #3a3a3a; }
.icons { display: flex; fill: #ccc; color: #ccc; }
.icons svg, .ic { width: 24px; height: 24px; fill: #ccc; margin: 0 10px; }
.icons svg.line, .ic.line { fill: none; stroke: #ccc; stroke-width: 1.800; }
.icons svg.dim, .ic.dim { opacity: .48; }
.ab { font: bold 8px "Open Sans"; fill: #ccc; stroke: none; }
.toolbar .icons:first-child { padding-left: 3px; }
.page-field { width: 34px; height: 28px; margin: 1px 7px 0 10px; border-bottom: 1px solid #686868; font-size: 11.500px; line-height: 26px; text-align: center; letter-spacing: -.3px; }
.page-count { width: 88px; font-size: 12px; letter-spacing: -.6px; white-space: nowrap; padding-left: 0; }
.divider { width: 1px; height: 28px; background: #3a3a3a; flex: none; }
.d1 { margin-right: 11px; }
.icons svg.hand { fill: none; stroke: #4ba0f5; stroke-width: 1.700; }
.zoom-field { width: 68px; height: 28px; margin-top: 1px; margin-left: 9px; border-bottom: 1px solid #686868; display: flex; align-items: center; padding: 0 8px; justify-content: space-between; font-size: 12px; letter-spacing: -.6px; }
.caret { width: 0; height: 0; border: solid transparent; border-width: 4px 3.500px 0; border-top-color: #ccc; }
.fit { width: 24px; height: 26px; margin-left: 19px; }
.fit-caret { margin-left: 3px; }
.dots { width: 19px; height: 5px; background: radial-gradient(circle, #ccc 1.900px, transparent 2.400px) 0 0 / 7px 5px; }
.more { margin-left: 28px; width: 21px; }
.share { margin-left: 61px; }

.commentbar { border-left: 10px solid #ffe12e; }
.commentbar h2 { width: 250px; padding-left: 10px; font-size: 15px; font-weight: 600; color: #eee; }
.wide span { width: 55px; display: flex; align-items: center; }
.commentbar .wide svg { margin: 0 3px 0 10px; }
.commentbar .pin { margin: 0 0 0 34px; }
.d3 { margin-left: 21px; }
.commentbar .bucket { margin: 0 0 0 19px; width: 26px; }
.commentbar .lines { margin: 0 0 0 17px; }
.aa { margin-left: 20px; width: 30px; font-size: 21px; color: #8b8b8b; letter-spacing: -.5px; }
.close-btn { width: 83px; height: 32px; border: 1.500px solid #ccc; border-radius: 16px; text-align: center; line-height: 29px; font-weight: 600; font-size: 14.300px; color: #ddd; margin-left: 187px; }

.workspace { height: 554px; flex: none; display: flex; }
.strip { background: #424242; display: flex; align-items: center; }
.left { width: 18px; padding-left: 6px; }
.right { width: 19px; border: solid #393939; border-width: 0 1px; padding-left: 5px; }
.tri { border: solid transparent; border-width: 6px 0 6px 6px; border-left-color: #c8c8c8; }
.canvas { width: 955px; background: #282828; padding: 0 61px; }
.page { height: 554px; background: #fff; padding: 15px 59px 0 157px; color: #222; }
.figure { height: 527px; border: 1px solid #000; border-bottom: 0; }
.figure-foot { height: 12px; border: solid #000; border-width: 0 1px; background: linear-gradient(#000 2px, transparent 0); }
.grammar { padding-top: 15px; font: 16px/22.860px "Liberation Serif", serif; }
.rule { height: 22.860px; display: grid; grid-template-columns: 230px 43px 1fr; white-space: nowrap; }
.rule p { display: flex; }
.rule em { letter-spacing: .12px; }
.rule > em, .sc { text-align: right; }
.rule u, .rule s { text-decoration: none; }
.rule s { word-spacing: -1px; white-space: pre; }
.rule u { text-align: center; font-family: "DejaVu Math TeX Gyre", "DejaVu Serif", serif; font-size: 15px; padding-right: 2px; }
.rule .alt, .rule .colon { font-family: "Liberation Serif", serif; }
.rule .alt { color: #2d87c8; padding-right: 4px; }
.rule b { font-weight: normal; width: 17.800px; padding-left: 5.500px; color: #333; }
.rule .pu { color: #803090; }
.rule .bl { color: #2d87c8; }
.rule .or { color: #b4703c; }
.r1, .r2 { height: 27px; line-height: 26px; }
.r1 p em { letter-spacing: .18px; }
.r3 { height: 25.700px; line-height: 27.500px; }
.gap { margin-bottom: 22.860px; }
.last { height: 32px; line-height: 31px; }
.m { font-family: "DejaVu Math TeX Gyre", "DejaVu Serif", serif; font-size: 15px; }
.quant { margin-left: -1px; }
.quant b { width: 15px; padding-left: 4px; }
.op { width: 20px; text-align: center; }
.neg { width: 15px; }
.imp { width: 40px; text-align: center; }
.iff { width: 42px; text-align: center; }
.eq { width: 21px; text-align: center; font-weight: bold; }
.br { width: 9px; }
.cl { text-align: right; margin-right: 0; }
.w8 { margin-left: 7px; }
.tl { margin-left: 2px; }
.rule sub { font-size: 11px; vertical-align: baseline; padding: 4px 0 0 1px; }
.sc { font-size: 16.500px; }
.sc small { font-size: 13.300px; }
.ops .m { font-size: 16px; margin-right: .5px; }
.ops { letter-spacing: .5px; }

.scroll { width: 17px; background: #f0f0f0; display: flex; flex-direction: column; align-items: center; justify-content: space-between; padding: 5px 0; }
.scroll svg { width: 10px; height: 8px; }
.scroll i { width: 15px; background: #cdcdcd; }
.main-scroll i { height: 17px; margin: 140px 0 auto; }
.list-scroll i { height: 74px; margin: auto 0 4px; }

.panel { width: 311px; background: #4a4a4a; padding-left: 5px; display: flex; flex-direction: column; border-right: 1px solid #393939; }
.panel-head { height: 49px; border-bottom: 1px solid #666; display: flex; align-items: center; padding-bottom: 1px; }
.panel-head h3 { width: 177px; padding: 0 0 2px 8px; font-size: 13px; font-weight: 600; letter-spacing: -.25px; color: #dcdcdc; }
.p-search { width: 24px; height: 24px; margin: 0 13px 0 0; }
.p-sort { width: 12px; height: 20px; margin-right: 18px; }
.p-filter { width: 18px; height: 18px; margin-right: 13px; }
.panel-head .dots { width: 21px; }
.panel-add { height: 74px; padding: 16px 26px 0 18px; background: #4d4d4d; }
.input { height: 30px; border: 1px solid #c4c4c4; border-radius: 3px; background: #e2e2e2; color: #6e6e6e; font: italic 14.300px/29px "Open Sans", sans-serif; padding-left: 3px; }
.panel-body { height: 431px; display: flex; justify-content: space-between; }
.list { padding: 1px 0 0 15px; overflow: hidden; }
.list article { height: 73px; display: grid; grid-template: 24px 30px / 30px 35px 1fr; align-items: center; }
.list svg { width: 24px; height: 24px; margin-left: -1px; }
.list .mk { color: #9a9a9a; margin-left: -2px; }
.list strong { font-size: 13.500px; font-weight: 700; color: #e4e4e4; }
.list time { font-size: 12px; letter-spacing: -.6px; color: #b8b8b8; padding-left: 1px; }
.list q { quotes: none; grid-column: 2 / 4; font-size: 13.400px; font-style: italic; color: #b2b2b2; margin-left: -2px; letter-spacing: .2px; }

.rail { width: 46px; background: #4a4a4a; }
.rail-items { height: 530px; overflow: hidden; }
.rail-items span { height: 46px; display: flex; align-items: center; justify-content: center; color: var(--c); }
.rail svg { width: 24px; height: 24px; fill: none; stroke: var(--c); stroke-width: 2; }
.rail use { stroke: none; }
.rail .fill { fill: var(--c); stroke: none; }
.rail .cut { stroke: #4a4a4a; }
.teal { --c: #26c0c7; } .pink { --c: #fb6db7; } .red { --c: #ff7c7c; } .violet { --c: #9090fa; }
.green { --c: #98f34d; } .magenta { --c: #e566f0; } .purple { --c: #b787f5; } .yellow { --c: #ffe12e; }
.rail .selected { --c: #fff; background: #ffe12e; }
.rail-more { height: 24px; background: #3e3e3e; display: grid; place-items: center; }
.rail-more svg { width: 14px; height: 8px; }

.taskbar { height: 40px; flex: none; background: linear-gradient(90deg, #284d9c, #284f9e 50%, #2a59a6); display: flex; }
.app { width: 62px; height: 40px; display: grid; place-items: center; }
.app svg { width: 32px; height: 32px; }
.start { width: 50px; } .start svg { width: 28px; height: 26px; }
.calc svg { width: 24px; } .calc { width: 60px; }
.note { width: 64px; } .ctl svg { height: 28px; }
.xl { font: bold 15px "Open Sans"; fill: #fff; }
.app.open { width: 60px; height: 39px; margin-right: 2px; border: 1px solid #9fb2d4; background: #7186b8; }
.ctl { width: 64px; }
.app.open svg { height: 30px; }
.app.open.current { border-color: #e8edf6; background: linear-gradient(135deg, #7d94c5, #b3c0dc); width: 59px; }
.app.current svg { width: 28px; height: 28px; }
.tray { margin-left: auto; display: flex; align-items: center; padding-right: 18px; font-size: 12px; }
.tray-up { border: solid transparent; border-width: 0 4px 4px; border-bottom-color: #fff; margin-right: 13px; }
.tray svg { width: 16px; height: 16px; margin-right: 8px; }
.lang { margin: 0 18px 0 9px; font-size: 12px; letter-spacing: -.6px; }
.clock { width: 60px; display: flex; flex-direction: column; text-align: center; line-height: 17px; white-space: nowrap; letter-spacing: -.4px; }
```
